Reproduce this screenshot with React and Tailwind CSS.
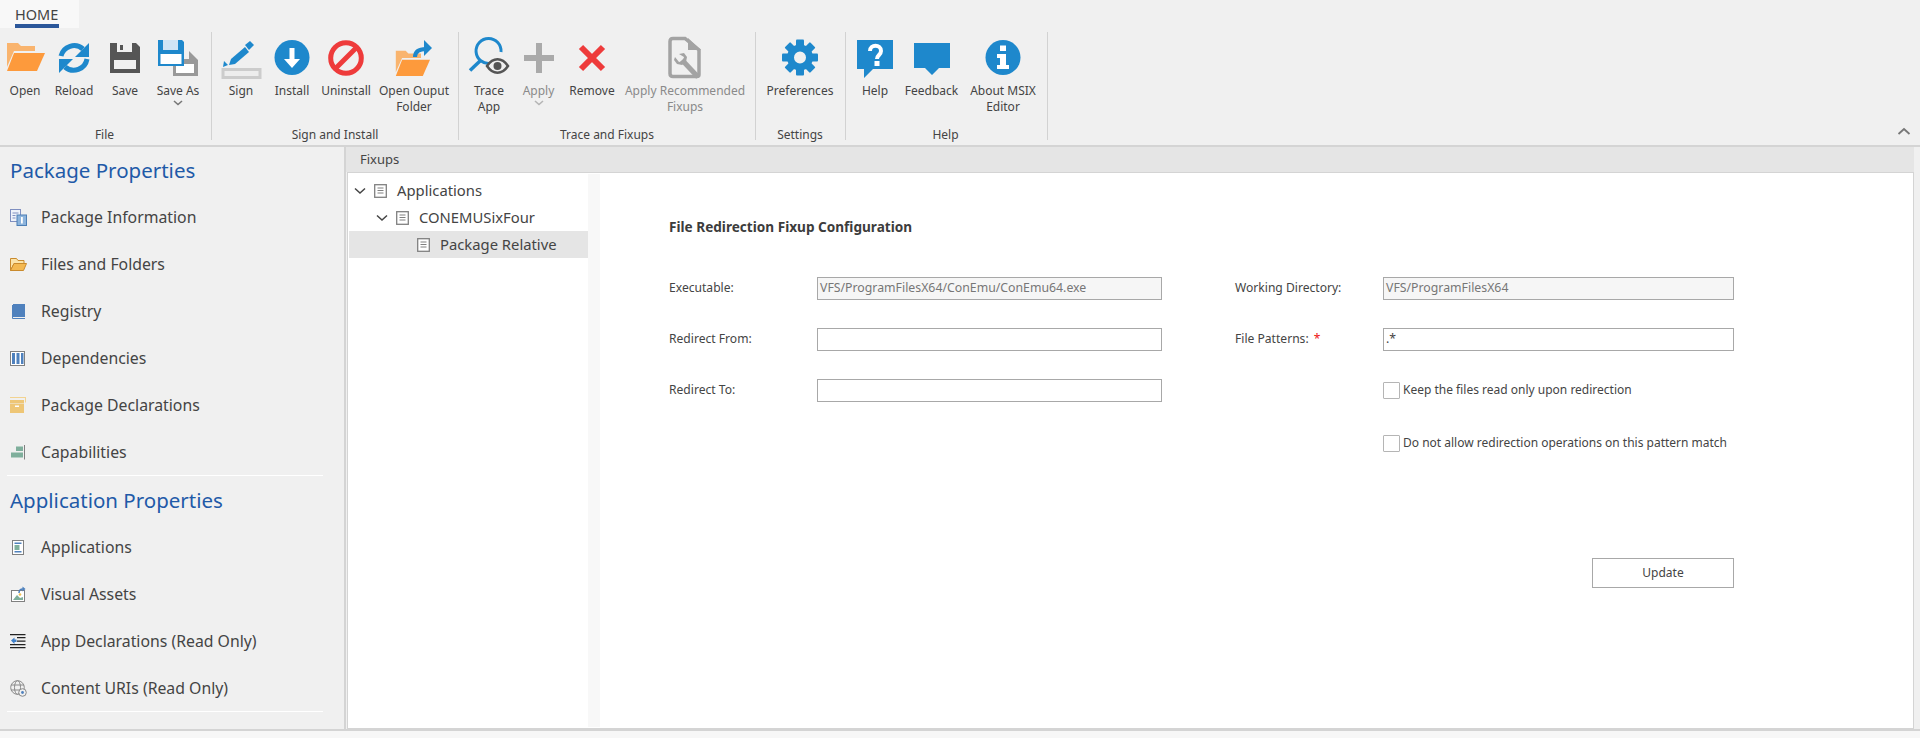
import React from "react";

const BLUE = "#1e88cc";
const Box = ({ children, w = 40, h = 36 }) => (
  <svg width={w} height={h} viewBox={`0 0 ${w} ${h}`} className="overflow-visible">{children}</svg>
);

const Folder = ({ dx = 0, dy = 0, s = 1 }) => (
  <g transform={`translate(${dx} ${dy}) scale(${s})`}>
    <path d="M2 3h11l3 3h14v5H9L2 27z" fill="#f9b46e" />
    <path d="M9 13h31l-8 18H2z" fill="#fd9a3c" />
  </g>
);
const IOpen = () => <Box><Folder /></Box>;
const IReload = () => (
  <Box>
    <path d="M7 16A13.5 13.5 0 0 1 29 9" fill="none" stroke={BLUE} strokeWidth="5" />
    <path d="M33 19A13.5 13.5 0 0 1 11 27" fill="none" stroke={BLUE} strokeWidth="5" />
    <path d="M35 3v14H21z" fill={BLUE} />
    <path d="M5 33V19h14z" fill={BLUE} />
  </Box>
);
const Floppy = ({ x, y, s, c, top, bottom }) => (
  <g transform={`translate(${x} ${y}) scale(${s})`}>
    <path d="M0 0h26l4 4v26H0z" fill={c} />
    <rect x="7" y="0" width="15" height="9" fill={top} />
    <rect x="10" y="2" width="3" height="5" fill={c} />
    <rect x="4" y="17" width="22" height="9" fill={bottom} />
  </g>
);
const ISave = () => <Box><Floppy x={5} y={3} s={1} c="#555555" top="#f0f0f0" bottom="#f0f0f0" /></Box>;
const ISaveAs = () => (
  <Box>
    <path d="M15 11h16l9 9v16H15z" fill="#999999" />
    <path d="M24 11h7v8h-7z" fill="#f0f0f0" />
    <rect x="18" y="24" width="18" height="9" fill="#ffffff" />
    <path d="M0 0h24l2 2 0 24H0z" fill={BLUE} />
    <rect x="5" y="0" width="15" height="10" fill="#cfe4f5" />
    <rect x="2.5" y="14" width="21" height="10" fill="#ffffff" />
    <path d="M25 2l1 1v22l-1 1z" fill={BLUE} />
  </Box>
);
const ISign = () => (
  <Box>
    <path d="M8 25l2-6 14-12 4 5-14 12z" fill={BLUE} />
    <path d="M2 27l1-6 4 4z" fill={BLUE} />
    <path d="M24 5l5-4 4 4-5 5z" fill={BLUE} />
    <rect x="2" y="29.5" width="37" height="8" fill="#ededed" stroke="#cccccc" strokeWidth="3" />
  </Box>
);
const IInstall = () => (
  <Box>
    <circle cx="20" cy="17.5" r="17.5" fill={BLUE} />
    <path d="M17.5 8h5v11h5.5l-8 9-8-9h5.500z" fill="#ffffff" />
  </Box>
);
const IUninstall = () => (
  <Box>
    <circle cx="20" cy="18" r="15.300" fill="#ffffff" fillOpacity="0" stroke="#ee3b3b" strokeWidth="5" />
    <path d="M30 8L10 28" stroke="#ee3b3b" strokeWidth="5" />
  </Box>
);
const IOpenOutput = () => (
  <Box>
    <Folder dx={0} dy={8} s={0.9} />
    <path d="M21 17c0-6 5-8 11-8" fill="none" stroke={BLUE} strokeWidth="4" />
    <path d="M30 0l8 8-8 8z" fill={BLUE} />
  </Box>
);
const ITrace = () => (
  <Box>
    <path d="M21.500 23.300A12.500 12.500 0 1 1 32 12" fill="none" stroke={BLUE} strokeWidth="3" />
    <path d="M1 30.500l10-9.500" stroke={BLUE} strokeWidth="3.500" />
    <path d="M18 26c6-9 15-9 21 0-6 9-15 9-21 0z" fill="#f0f0f0" stroke="#555555" strokeWidth="2.500" />
    <circle cx="28.500" cy="26" r="4" fill="#555555" />
  </Box>
);
const IPlus = () => (
  <Box><path d="M17 3h6v12h12v6H23v12h-6V21H5v-6h12z" fill="#aaaaaa" /></Box>
);
const IRemove = () => (
  <Box><path d="M9 7l22 22M31 7L9 29" stroke="#ee3b3b" strokeWidth="6" /></Box>
);
const IRecommend = () => (
  <Box>
    <path d="M20 -1.500H8q-3 0-3 3v32q0 3 3 3h24q2 0 2-2V10z" fill="none" stroke="#a3a3a3" strokeWidth="3.500" />
    <path d="M23 -2l13 12H23z" fill="#a3a3a3" />
    <path d="M17 20l16 17" stroke="#a3a3a3" strokeWidth="5" />
    <path d="M10 17l4 5 4-1 1-4-5-3 5-1 3 4-1 5-4 3-5-1-3-4z" fill="#a3a3a3" />
  </Box>
);
const IGear = () => (
  <Box>
    {[0, 45, 90, 135, 180, 225, 270, 315].map((a) => (
      <rect key={a} x="16" y="-0.500" width="8" height="8" rx="1" fill={BLUE} transform={`rotate(${a} 20 17.500)`} />
    ))}
    <circle cx="20" cy="17.500" r="9.500" fill="none" stroke={BLUE} strokeWidth="7" />
  </Box>
);
const IHelp = () => (
  <Box>
    <path d="M2 0h36v29H18l-9 9v-9H2z" fill={BLUE} />
    <path d="M15 11c0-7 11-7 11 0 0 4-4 4-4 8" fill="none" stroke="#ffffff" strokeWidth="4" />
    <rect x="19.500" y="21" width="5" height="5" fill="#ffffff" />
  </Box>
);
const IFeedback = () => (
  <Box><path d="M2 3h36v25H27l-7 7-7-7H2z" fill={BLUE} /></Box>
);
const IAbout = () => (
  <Box>
    <circle cx="20" cy="17.500" r="17.500" fill={BLUE} />
    <rect x="17" y="5.500" width="6" height="5.500" fill="#ffffff" />
    <path d="M14 14h9v11h3v4H14v-4h3v-7h-3z" fill="#ffffff" />
  </Box>
);

const Chev = ({ muted }) => (
  <svg width="10" height="6" viewBox="0 0 10 6" className="mx-auto -mt-[3px]">
    <path d="M1 1l4 3.500L9 1" fill="none" stroke={muted ? "#b5b5b5" : "#777777"} strokeWidth="1.600" />
  </svg>
);

const Btn = ({ w, icon, label, label2, muted, chev }) => (
  <div className={`flex flex-col items-center h-[97px] pt-[8px] shrink-0 ${muted ? "text-[#8a8a8a]" : "text-[#444444]"}`} style={{ width: w }}>
    <div className="h-[36px] flex items-start justify-center">{icon}</div>
    <div className="mt-[7px] text-[12px] leading-[16px] text-center whitespace-nowrap">{label}</div>
    {label2 && <div className="text-[12px] leading-[16px] text-center whitespace-nowrap">{label2}</div>}
    {chev && <div className="mt-[4px]"><Chev muted={muted} /></div>}
  </div>
);

const Group = ({ w, pl, labelPr = 0, label, children }) => (
  <div className="h-[108px] border-r border-[#d2d2d2] flex flex-col shrink-0" style={{ width: w }}>
    <div className="flex h-[97px]" style={{ paddingLeft: pl }}>{children}</div>
    <div className="h-[11px] leading-[11px] text-[12px] text-center text-[#444444]" style={{ paddingRight: labelPr }}>{label}</div>
  </div>
);

const S = ({ children }) => (
  <svg width="17" height="17" viewBox="0 0 17 17" className="shrink-0">{children}</svg>
);
const SideItem = ({ icon, label }) => (
  <div className="h-[47px] flex items-center pl-[10px] text-[15.800px] text-[#444444]">
    {icon}
    <span className="ml-[14px] whitespace-nowrap">{label}</span>
  </div>
);
const Heading = ({ children }) => (
  <div className="h-[47px] flex items-center pl-[10px] text-[20.500px] text-[#1f5aa8] whitespace-nowrap">{children}</div>
);

const DocIco = () => (
  <svg width="13" height="14" viewBox="0 0 13 14" className="shrink-0">
    <rect x="0.700" y="0.700" width="11.600" height="12.600" fill="#ffffff" stroke="#808080" strokeWidth="1.300" />
    <path d="M3.500 4h6M3.500 6.500h6M3.500 9h6" stroke="#808080" strokeWidth="1" />
  </svg>
);
const TreeChev = () => (
  <svg width="12" height="8" viewBox="0 0 12 8" className="shrink-0">
    <path d="M1 1.500l5 4.500 5-4.500" fill="none" stroke="#444444" strokeWidth="1.500" />
  </svg>
);
const Tree = ({ pl, chev, label, selected }) => (
  <div className={`h-[27px] flex items-center text-[14.800px] text-[#444444] ${selected ? "bg-[#e5e5e5]" : ""}`} style={{ paddingLeft: pl }}>
    {chev && <span className="mr-[8px] flex"><TreeChev /></span>}
    <DocIco />
    <span className="ml-[10px] whitespace-nowrap">{label}</span>
  </div>
);

const Field = ({ label, value, disabled, w, labelW, star }) => (
  <div className="flex items-center h-[23px]">
    <div className="text-[12.100px] text-[#444444] whitespace-nowrap" style={{ width: labelW }}>
      {label}{star && <span className="text-[#ee1111] ml-[5px]">*</span>}
    </div>
    <div className={`h-[23px] border border-[#a8a8a8] pl-[2px] flex items-center text-[12.300px] ${disabled ? "bg-[#f6f6f6] text-[#777777]" : "bg-white text-[#444444]"}`} style={{ width: w }}>{value}</div>
  </div>
);

const Check = ({ label }) => (
  <div className="flex items-center h-[18px] ml-[148px]">
    <div className="w-[17px] h-[17px] bg-white border border-[#b5b5b5] rounded-[1px] shrink-0"></div>
    <span className="ml-[3px] text-[12px] text-[#444444] whitespace-nowrap">{label}</span>
  </div>
);

export default function App() {
  return (
    <div className="w-[1920px] h-[738px] overflow-hidden flex flex-col bg-[#f0f0f0] font-['Noto_Sans',sans-serif]">
      <div className="h-[28px] shrink-0 flex">
        <div className="w-[79px] h-[28px] bg-[#f8f8f8] pl-[15px] flex flex-col">
          <div className="w-[44px] h-[24px] text-[14.500px] leading-[28px] text-[#444444] whitespace-nowrap">HOME</div>
          <div className="w-[44px] h-[4px] bg-[#2b579a]"></div>
        </div>
      </div>

      <div className="h-[119px] shrink-0 pt-[4px] border-b-2 border-[#d4d4d4] flex relative">
        <Group w={212} pl={0} labelPr={2} label="File">
          <Btn w={50} icon={<IOpen />} label="Open" />
          <Btn w={48} icon={<IReload />} label="Reload" />
          <Btn w={54} icon={<ISave />} label="Save" />
          <Btn w={52} icon={<ISaveAs />} label="Save As" chev />
        </Group>
        <Group w={247} pl={4} label="Sign and Install">
          <Btn w={50} icon={<ISign />} label="Sign" />
          <Btn w={52} icon={<IInstall />} label="Install" />
          <Btn w={56} icon={<IUninstall />} label="Uninstall" />
          <Btn w={80} icon={<IOpenOutput />} label="Open Ouput" label2="Folder" />
        </Group>
        <Group w={297} pl={6} label="Trace and Fixups">
          <Btn w={48} icon={<ITrace />} label="Trace" label2="App" />
          <Btn w={51} icon={<IPlus />} label="Apply" muted chev />
          <Btn w={56} icon={<IRemove />} label="Remove" />
          <Btn w={130} icon={<IRecommend />} label="Apply Recommended" label2="Fixups" muted />
        </Group>
        <Group w={90} pl={0} labelPr={1} label="Settings">
          <Btn w={88} icon={<IGear />} label="Preferences" />
        </Group>
        <Group w={202} pl={3} labelPr={2} label="Help">
          <Btn w={52} icon={<IHelp />} label="Help" />
          <Btn w={61} icon={<IFeedback />} label="Feedback" />
          <Btn w={82} icon={<IAbout />} label="About MSIX" label2="Editor" />
        </Group>
        <svg width="14" height="8" viewBox="0 0 14 8" className="absolute left-[1897px] top-[99px]">
          <path d="M1.500 7L7 2l5.500 5" fill="none" stroke="#777777" strokeWidth="1.800" />
        </svg>
      </div>

      <div className="flex-1 min-h-0 flex">
        <div className="w-[344px] shrink-0">
          <Heading>Package Properties</Heading>
          <SideItem label="Package Information" icon={<S>
            <rect x="0.500" y="0.500" width="10" height="12" fill="#eef2fa" stroke="#7f8fc0" />
            <path d="M2.500 4h6M2.500 6.500h3M2.500 9h3" stroke="#7f8fc0" />
            <rect x="7" y="6" width="9.500" height="10.500" fill="#8db4dc" stroke="#4d7fb5" />
            <rect x="11" y="8" width="1.800" height="6.500" fill="#ffffff" />
          </S>} />
          <SideItem label="Files and Folders" icon={<S>
            <path d="M0.500 2.500h6l1.500 2h6v3H4l-3.500 7z" fill="#fbe3a8" stroke="#c98a2d" />
            <path d="M4 7.500h12.500L13.500 14.500H.5z" fill="#f4b850" stroke="#c98a2d" />
          </S>} />
          <SideItem label="Registry" icon={<S>
            <path d="M3 1h12v13H3z" fill="#4f81bd" />
            <path d="M2.500 2v13.500H15" fill="none" stroke="#4f81bd" />
          </S>} />
          <SideItem label="Dependencies" icon={<S>
            <rect x="0.500" y="1.500" width="14" height="14" fill="#ffffff" stroke="#808080" />
            <path d="M2 3h3v11H2zM6.500 3h3v11h-3zM11 3h2.500v11H11z" fill="#4f81bd" />
          </S>} />
          <SideItem label="Package Declarations" icon={<S>
            <path d="M0 0h16v5.500h-1V1H0z" fill="#f2d391" />
            <path d="M0 3h14v3H0z" fill="#eec676" />
            <path d="M0 6.500h14V16H0z" fill="#eec676" />
            <rect x="5" y="8.500" width="4" height="1.500" fill="#ffffff" />
          </S>} />
          <SideItem label="Capabilities" icon={<S>
            <path d="M6 2.500h7v4.500H6zM1 8.500h12v5H1z" fill="#7faf9c" />
            <path d="M14.500 1v14.500" stroke="#808080" />
          </S>} />
          <div className="h-[1px] -mt-[1px] ml-[7px] w-[316px] bg-white"></div>
          <div className="h-[1px]"></div>
          <Heading>Application Properties</Heading>
          <SideItem label="Applications" icon={<S>
            <rect x="2.500" y="1.500" width="11" height="14" fill="#ffffff" stroke="#808080" />
            <path d="M4.500 3.500h7v1.500h-7zM4.500 12h7v1.500h-7z" fill="#4f81bd" />
            <rect x="4.500" y="6" width="5" height="5" fill="#7faf9c" />
          </S>} />
          <SideItem label="Visual Assets" icon={<S>
            <rect x="1.500" y="4.500" width="13" height="11" fill="#ffffff" stroke="#808080" />
            <path d="M3 14l4-5 3 3 3-1v3z" fill="#7faf9c" />
            <path d="M9 7c0-3 2-4 4-4" fill="none" stroke="#4f81bd" strokeWidth="1.500" />
            <path d="M12.500 0.500l3 2.500-3 2.500z" fill="#4f81bd" />
            <circle cx="10" cy="8.500" r="1.300" fill="#f0c050" />
          </S>} />
          <SideItem label="App Declarations (Read Only)" icon={<S>
            <path d="M0 1h15.500v1.300H0zM7 4h8.500v1.300H7zM7 7.500h8.500v1.300H7zM0 11h15.500v1.300H0zM0 14h15.500v1.300H0z" fill="#222222" />
            <path d="M1 7.500L4.500 4.500v2h2v2.500h-2v2z" fill="#3f7fc8" />
          </S>} />
          <SideItem label="Content URIs (Read Only)" icon={<S>
            <circle cx="7.500" cy="7.500" r="6.800" fill="none" stroke="#8a8a8a" />
            <ellipse cx="7.500" cy="7.500" rx="3" ry="6.800" fill="none" stroke="#8a8a8a" />
            <path d="M1 5h13M1 10h13" stroke="#8a8a8a" />
            <circle cx="12.500" cy="12.500" r="3.800" fill="#f0f0f0" stroke="#8a8a8a" />
            <circle cx="12.500" cy="12.500" r="1.400" fill="#4f81bd" />
          </S>} />
          <div className="h-[1px] -mt-[1px] ml-[7px] w-[316px] bg-white"></div>
        </div>

        <div className="flex-1 min-w-0 flex flex-col border-l-2 border-[#d4d4d4] mr-[6px]">
          <div className="h-[25px] shrink-0 bg-[#e5e5e5] pl-[14px] flex items-center text-[13px] text-[#444444]">Fixups</div>
          <div className="flex-1 min-h-0 border border-[#d4d4d4] ml-[1px] p-[1px] flex bg-white">
            <div className="w-[239px] shrink-0 pt-[3px] bg-white">
              <Tree pl={5} chev label="Applications" />
              <Tree pl={27} chev label="CONEMUSixFour" />
              <Tree pl={68} label="Package Relative" selected />
            </div>
            <div className="w-[12px] shrink-0 bg-[#f8f8f8]"></div>
            <div className="flex-1 min-w-0 pl-[69px] pt-[44px] bg-white">
              <div className="text-[13.600px] leading-[18px] font-bold text-[#3c3c3c] whitespace-nowrap">File Redirection Fixup Configuration</div>
              <div className="flex mt-[41px]">
                <div className="w-[566px] shrink-0 flex flex-col gap-[28px]">
                  <Field label="Executable:" value="VFS/ProgramFilesX64/ConEmu/ConEmu64.exe" disabled w={345} labelW={148} />
                  <Field label="Redirect From:" value="" w={345} labelW={148} />
                  <Field label="Redirect To:" value="" w={345} labelW={148} />
                </div>
                <div className="flex flex-col">
                  <Field label="Working Directory:" value="VFS/ProgramFilesX64" disabled w={351} labelW={148} />
                  <div className="mt-[28px]"><Field label="File Patterns:" star value=".*" w={351} labelW={148} /></div>
                  <div className="mt-[30px]"><Check label="Keep the files read only upon redirection" /></div>
                  <div className="mt-[35px]"><Check label="Do not allow redirection operations on this pattern match" /></div>
                  <div className="mt-[106px] ml-[357px] w-[142px] h-[30px] border border-[#a8a8a8] flex items-center justify-center text-[12px] text-[#444444]">Update</div>
                </div>
              </div>
            </div>
          </div>
        </div>
      </div>

      <div className="h-[9px] shrink-0 border-t-2 border-[#d4d4d4] bg-[#f7f7f7]"></div>
    </div>
  );
}
